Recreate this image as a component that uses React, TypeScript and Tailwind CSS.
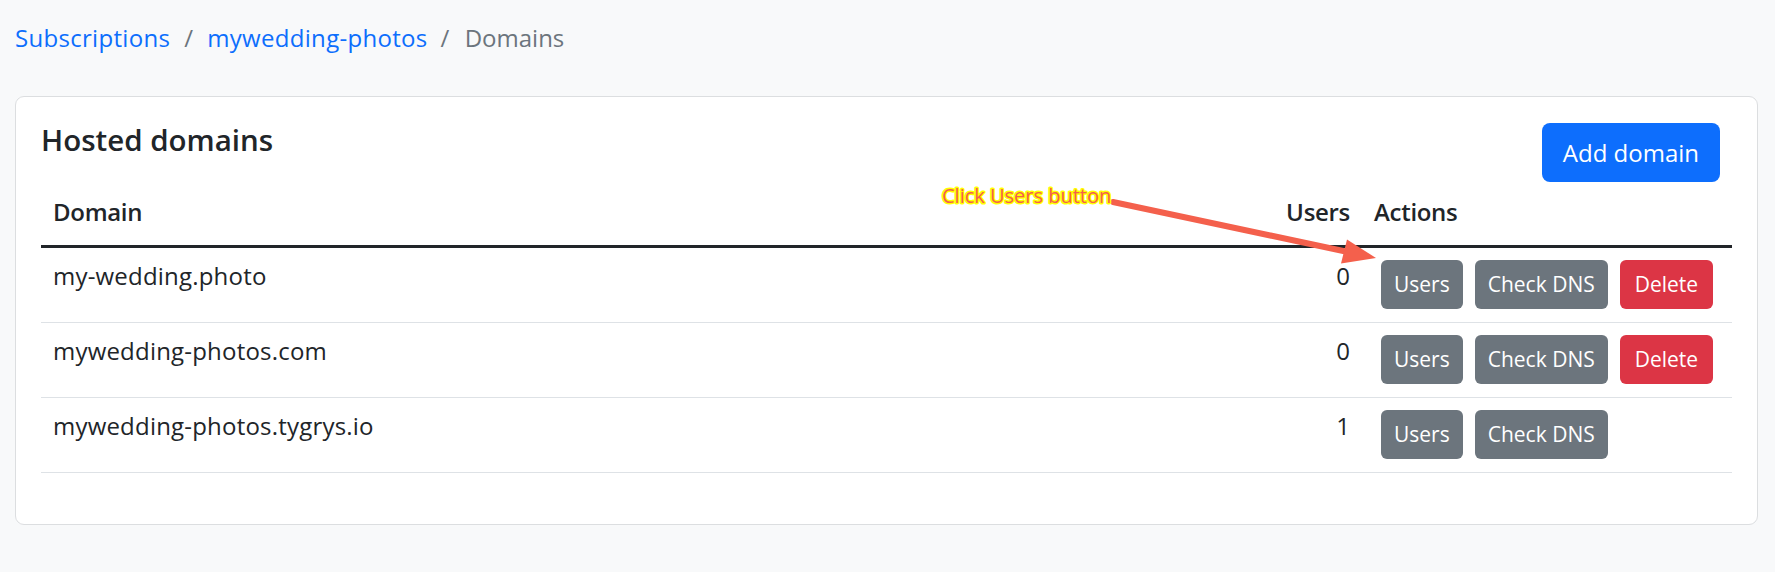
import React from "react";

const rows = [
  { domain: "my-wedding.photo", users: 0, del: true },
  { domain: "mywedding-photos.com", users: 0, del: true },
  { domain: "mywedding-photos.tygrys.io", users: 1, del: false },
];

function SmallBtn({ children, variant }: { children: React.ReactNode; variant: "secondary" | "danger" }) {
  return (
    <button
      className={
        "h-[49px] rounded-[6px] text-[21px] leading-none text-white " +
        (variant === "danger" ? "bg-[#dc3545] px-[15px]" : "bg-[#6c757d] px-[13px]")
      }
    >
      {children}
    </button>
  );
}

export default function App() {
  return (
    <div
      className="relative min-h-[572px] bg-[#f8f9fa] text-[#212529] pl-[15px] pr-[17px] pt-[20px]"
      style={{ fontFamily: '"Open Sans", "Noto Sans", sans-serif' }}
    >
      <nav className="flex items-center text-[24px] leading-[36px] tracking-[0.3px]">
        <a className="text-[#0d6efd]">Subscriptions</a>
        <span className="pl-[14px] pr-[14px] text-[#6c757d]">/</span>
        <a className="text-[#0d6efd]">mywedding-photos</a>
        <span className="pl-[13px] pr-[15px] text-[#6c757d]">/</span>
        <span className="text-[#6c757d] tracking-[0px]">Domains</span>
      </nav>

      <div className="mt-[40px] bg-white border border-[#dcdee0] rounded-[9px] px-[25px] pt-[25px] pb-[25px]">
        <div className="flex items-start justify-between h-[63px]">
          <h4 className="text-[29.5px] leading-[36px] font-semibold text-[#212529]">Hosted domains</h4>
          <button className="mt-[1px] mr-[12px] h-[59px] px-[21px] rounded-[8px] bg-[#0d6efd] text-white text-[24px] leading-none">
            Add domain
          </button>
        </div>

        <table className="w-full table-fixed border-collapse mb-[26px]">
          <thead>
            <tr className="border-b-[3px] border-[#212529]">
              <th className="text-left font-semibold text-[24px] leading-[36px] tracking-[-0.3px] pl-[12px] pt-[9px] pb-[15px]">Domain</th>
              <th className="w-[86px] text-right font-semibold text-[24px] leading-[36px] tracking-[-0.3px] pr-[12px] pt-[9px] pb-[15px]">Users</th>
              <th className="w-[370px] text-left font-semibold text-[24px] leading-[36px] tracking-[-0.3px] pl-[12px] pt-[9px] pb-[15px]">Actions</th>
            </tr>
          </thead>
          <tbody>
            {rows.map((r) => (
              <tr key={r.domain} className="border-b border-[#dee2e6]">
                <td className="align-top text-[24px] leading-[36px] tracking-[0.2px] pl-[12px] pt-[10px]">{r.domain}</td>
                <td className="align-top text-right text-[24px] leading-[36px] pr-[12px] pt-[10px]">{r.users}</td>
                <td className="align-top pt-[12px] pb-[13px]">
                  <div className="flex gap-[12px] ml-[19px]">
                    <SmallBtn variant="secondary">Users</SmallBtn>
                    <SmallBtn variant="secondary">Check DNS</SmallBtn>
                    {r.del && <SmallBtn variant="danger">Delete</SmallBtn>}
                  </div>
                </td>
              </tr>
            ))}
          </tbody>
        </table>
      </div>

      <svg
        className="absolute left-0 top-0 pointer-events-none"
        width="1775"
        height="572"
        viewBox="0 0 1775 572"
      >
        <line x1="1113" y1="202" x2="1348" y2="252" stroke="#f4604c" strokeWidth="6" strokeLinecap="round" />
        <polygon points="1376,258 1347,239.5 1341,263.5" fill="#f4604c" />
        <text
          x="942"
          y="202.5"
          fontSize="20"
          fontFamily='"Open Sans", sans-serif'
          fill="#f4604c"
          stroke="#ffff00"
          strokeWidth="3"
          strokeLinejoin="round"
          style={{ paintOrder: "stroke" }}
        >
          Click Users button
        </text>
      </svg>
    </div>
  );
}
